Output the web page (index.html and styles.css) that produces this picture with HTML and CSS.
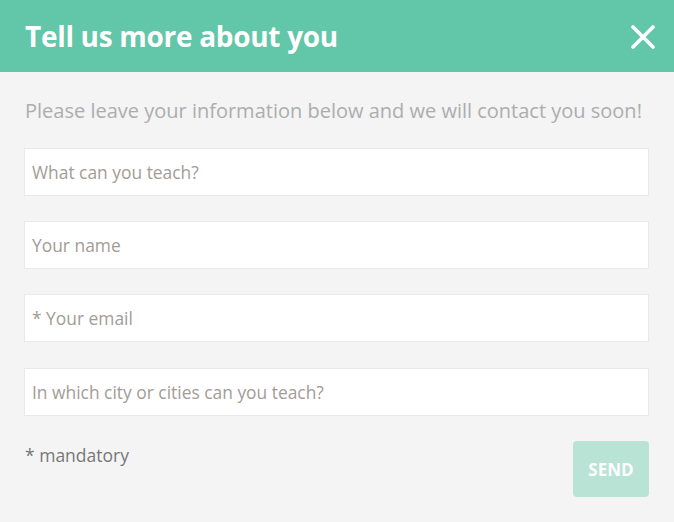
FILE: index.html
```html
<!DOCTYPE html>
<html>
<head>
<meta charset="utf-8">
<link rel="stylesheet" href="styles.css">
</head>
<body>
<div class="modal">
  <header class="head">
    <h1 class="title">Tell us more about you</h1>
    <button class="close" aria-label="Close">
      <svg width="24" height="24" viewBox="0 0 24 24"><path d="M2 2 L22 22 M22 2 L2 22" stroke="#fff" stroke-width="3.6" stroke-linecap="round"/></svg>
    </button>
  </header>
  <div class="body">
    <p class="intro">Please leave your information below and we will contact you soon!</p>
    <form class="form">
      <input class="field" type="text" placeholder="What can you teach?">
      <input class="field" type="text" placeholder="Your name">
      <input class="field" type="text" placeholder="* Your email">
      <input class="field field-last" type="text" placeholder="In which city or cities can you teach?">
      <div class="foot">
        <span class="note">* mandatory</span>
        <button class="send" type="button">SEND</button>
      </div>
    </form>
  </div>
</div>
</body>
</html>
```
FILE: styles.css
```css
* { box-sizing: border-box; }
html, body { margin: 0; padding: 0; }
body {
  width: 674px;
  height: 522px;
  background: #f4f4f4;
  font-family: "Open Sans", "Liberation Sans", sans-serif;
  overflow: hidden;
}
.modal { width: 674px; }
.head {
  height: 72px;
  background: #62c6a9;
  display: flex;
  align-items: center;
  justify-content: space-between;
  padding: 0 19px 0 25px;
}
.title {
  margin: 0;
  color: #fff;
  font-size: 28px;
  font-weight: 700;
  letter-spacing: -0.3px;
  line-height: 1;
}
.close {
  background: none;
  border: 0;
  padding: 0;
  width: 24px;
  height: 24px;
  display: flex;
  margin-top: 2px;
}
.body { padding: 0 25px 0 24px; }
.intro {
  margin: 26px 0 0 1px;
  color: #adadad;
  font-size: 20px;
  line-height: 26px;
}
.form {
  margin-top: 24px;
  display: flex;
  flex-direction: column;
  gap: 25px;
}
.field {
  width: 625px;
  height: 48px;
  border: 1px solid #e9e9e9;
  background: #fff;
  padding: 0 7px;
  font-family: inherit;
  font-size: 17.4px;
  color: #777;
  outline: none;
}
.field-last { margin-top: 1px; }
.field::placeholder { color: #a39c96; }
.foot {
  display: flex;
  justify-content: space-between;
  align-items: flex-start;
}
.note {
  color: #777;
  font-size: 17.5px;
  line-height: 24px;
  margin: 2px 0 0 1px;
}
.send {
  width: 76px;
  height: 56px;
  background: #b8e3d5;
  border: 0;
  border-radius: 4px;
  color: #fff;
  font-family: inherit;
  font-weight: 700;
  font-size: 17px;
}
```
